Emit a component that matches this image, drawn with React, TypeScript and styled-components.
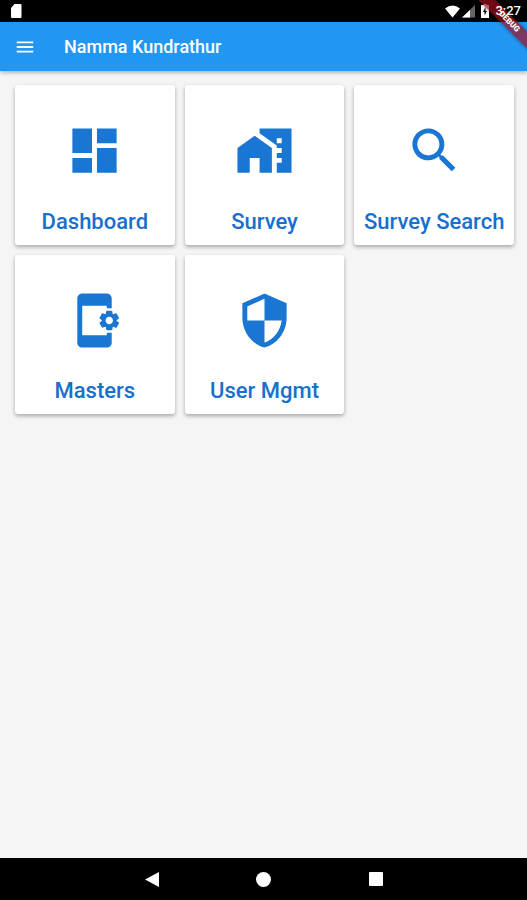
import React from "react";
import styled, { createGlobalStyle } from "styled-components";
import {
  MdAppSettingsAlt,
  MdDashboard,
  MdMenu,
  MdSearch,
  MdSecurity,
} from "react-icons/md";

const GlobalStyle = createGlobalStyle`
  *, *::before, *::after { box-sizing: border-box; }
  body {
    margin: 0;
    background: #f5f5f5;
    font-family: Roboto, "Liberation Sans", sans-serif;
  }
`;

const Screen = styled.div`
  display: flex;
  flex-direction: column;
  min-height: 100vh;
  position: relative;
  overflow: hidden;
`;

const StatusBar = styled.div`
  display: flex;
  align-items: center;
  justify-content: space-between;
  height: 22px;
  padding: 0 6px 0 10px;
  background: #000;
  color: #fff;
`;

const StatusGroup = styled.div`
  display: flex;
  align-items: center;
  gap: 2px;

  svg {
    display: block;
  }
`;

/* The clock stays readable above the corner ribbon. */
const Clock = styled.time`
  position: relative;
  z-index: 2;
  font-size: 13px;
  font-weight: 500;
  line-height: 22px;
`;

const AppBar = styled.header`
  display: flex;
  align-items: center;
  gap: 28px;
  height: 49px;
  padding: 0 14px;
  background: #2196f3;
  color: #fff;
  box-shadow: 0 2px 4px rgba(0, 0, 0, 0.26);
`;

const MenuButton = styled.button`
  display: flex;
  padding: 0;
  border: 0;
  background: none;
  color: inherit;
  cursor: pointer;
`;

const Title = styled.h1`
  margin: 0;
  font-size: 18px;
  font-weight: 500;
  line-height: 24px;
`;

const TileGrid = styled.main`
  flex: 1;
  display: grid;
  grid-template-columns: repeat(3, 1fr);
  align-content: start;
  gap: 10px;
  padding: 14px 13px 14px 15px;
`;

const Tile = styled.button`
  display: flex;
  flex-direction: column;
  align-items: center;
  justify-content: space-between;
  aspect-ratio: 1;
  min-width: 0;
  padding: 36px 0 9px;
  border: 0;
  border-radius: 3px;
  background: #fff;
  box-shadow: 0 2px 4px rgba(0, 0, 0, 0.32);
  color: #1976d2;
  font-family: inherit;
  cursor: pointer;
`;

const TileLabel = styled.span`
  color: #176fce;
  font-size: 22px;
  font-weight: 500;
  line-height: 28px;
  white-space: nowrap;
`;

const NavBar = styled.nav`
  display: flex;
  align-items: center;
  justify-content: center;
  gap: 84px;
  height: 42px;
  background: #000;
`;

const NavButton = styled.button`
  display: flex;
  justify-content: center;
  width: 28px;
  padding: 0;
  border: 0;
  background: none;
  color: #fff;
  cursor: pointer;
`;

const DebugRibbon = styled.div`
  position: absolute;
  z-index: 1;
  top: 16px;
  right: -32px;
  width: 100px;
  height: 12px;
  transform: rotate(45deg);
  background: rgba(160, 16, 32, 0.7);
  box-shadow: 0 0 4px rgba(0, 0, 0, 0.4);
  color: #fff;
  font-size: 8px;
  font-weight: 900;
  line-height: 12px;
  text-align: center;
  pointer-events: none;
`;

const HomeWorkIcon = ({ size }: { size: number }) => (
  <svg width={size} height={size} viewBox="0 0 24 24" fill="currentColor" aria-hidden="true">
    <path d="M1 11v10h5v-6h4v6h5V11L8 6z" />
    <path d="M10 3v1.97l7 5V11h2v2h-2v2h2v2h-2v4h6V3H10zm9 6h-2V7h2v2z" />
  </svg>
);

const tiles = [
  { label: "Dashboard", Icon: MdDashboard },
  { label: "Survey", Icon: HomeWorkIcon },
  { label: "Survey Search", Icon: MdSearch },
  { label: "Masters", Icon: MdAppSettingsAlt },
  { label: "User Mgmt", Icon: MdSecurity },
];

export default function App() {
  return (
    <>
      <GlobalStyle />
      <Screen>
        <StatusBar>
          <svg width="12" height="14" viewBox="0 0 12 14" aria-hidden="true">
            <path d="M4.500 0H10.500a1 1 0 0 1 1 1V13a1 1 0 0 1-1 1H2a1 1 0 0 1-1-1V4z" fill="#fff" />
          </svg>
          <StatusGroup>
            <svg width="15" height="13" viewBox="0 0 15 13" aria-hidden="true">
              <path d="M0 3.500Q7.500-2.500 15 3.500L7.500 12.500z" fill="#fff" />
            </svg>
            <svg width="13" height="13" viewBox="0 0 13 13" aria-hidden="true">
              <path d="M13 0v12.500H0z" fill="#666" />
              <path d="M8 5v7.500H0z" fill="#fff" />
            </svg>
            <svg width="16" height="14" viewBox="0 0 16 14" aria-hidden="true">
              <path d="M6.500 0h3v1H12v13H4V1h2.500z" fill="#fff" />
              <path d="M8.500 3L6 8h1.500v3.500L10 7H8.500z" fill="#000" />
            </svg>
            <Clock>3:27</Clock>
          </StatusGroup>
        </StatusBar>
        <AppBar>
          <MenuButton type="button" aria-label="Open menu">
            <MdMenu size={22} />
          </MenuButton>
          <Title>Namma Kundrathur</Title>
        </AppBar>
        <TileGrid>
          {tiles.map(({ label, Icon }) => (
            <Tile type="button" key={label}>
              <Icon size={59} />
              <TileLabel>{label}</TileLabel>
            </Tile>
          ))}
        </TileGrid>
        <NavBar aria-label="System">
          <NavButton type="button" aria-label="Back">
            <svg width="14" height="15" viewBox="0 0 14 15" aria-hidden="true">
              <path d="M14 0v15L0 7.500z" fill="currentColor" />
            </svg>
          </NavButton>
          <NavButton type="button" aria-label="Home">
            <svg width="15" height="15" viewBox="0 0 15 15" aria-hidden="true">
              <circle cx="7.500" cy="7.500" r="7.500" fill="currentColor" />
            </svg>
          </NavButton>
          <NavButton type="button" aria-label="Recent apps">
            <svg width="14" height="14" viewBox="0 0 14 14" aria-hidden="true">
              <rect width="14" height="14" rx="1" fill="currentColor" />
            </svg>
          </NavButton>
        </NavBar>
        <DebugRibbon>DEBUG</DebugRibbon>
      </Screen>
    </>
  );
}
